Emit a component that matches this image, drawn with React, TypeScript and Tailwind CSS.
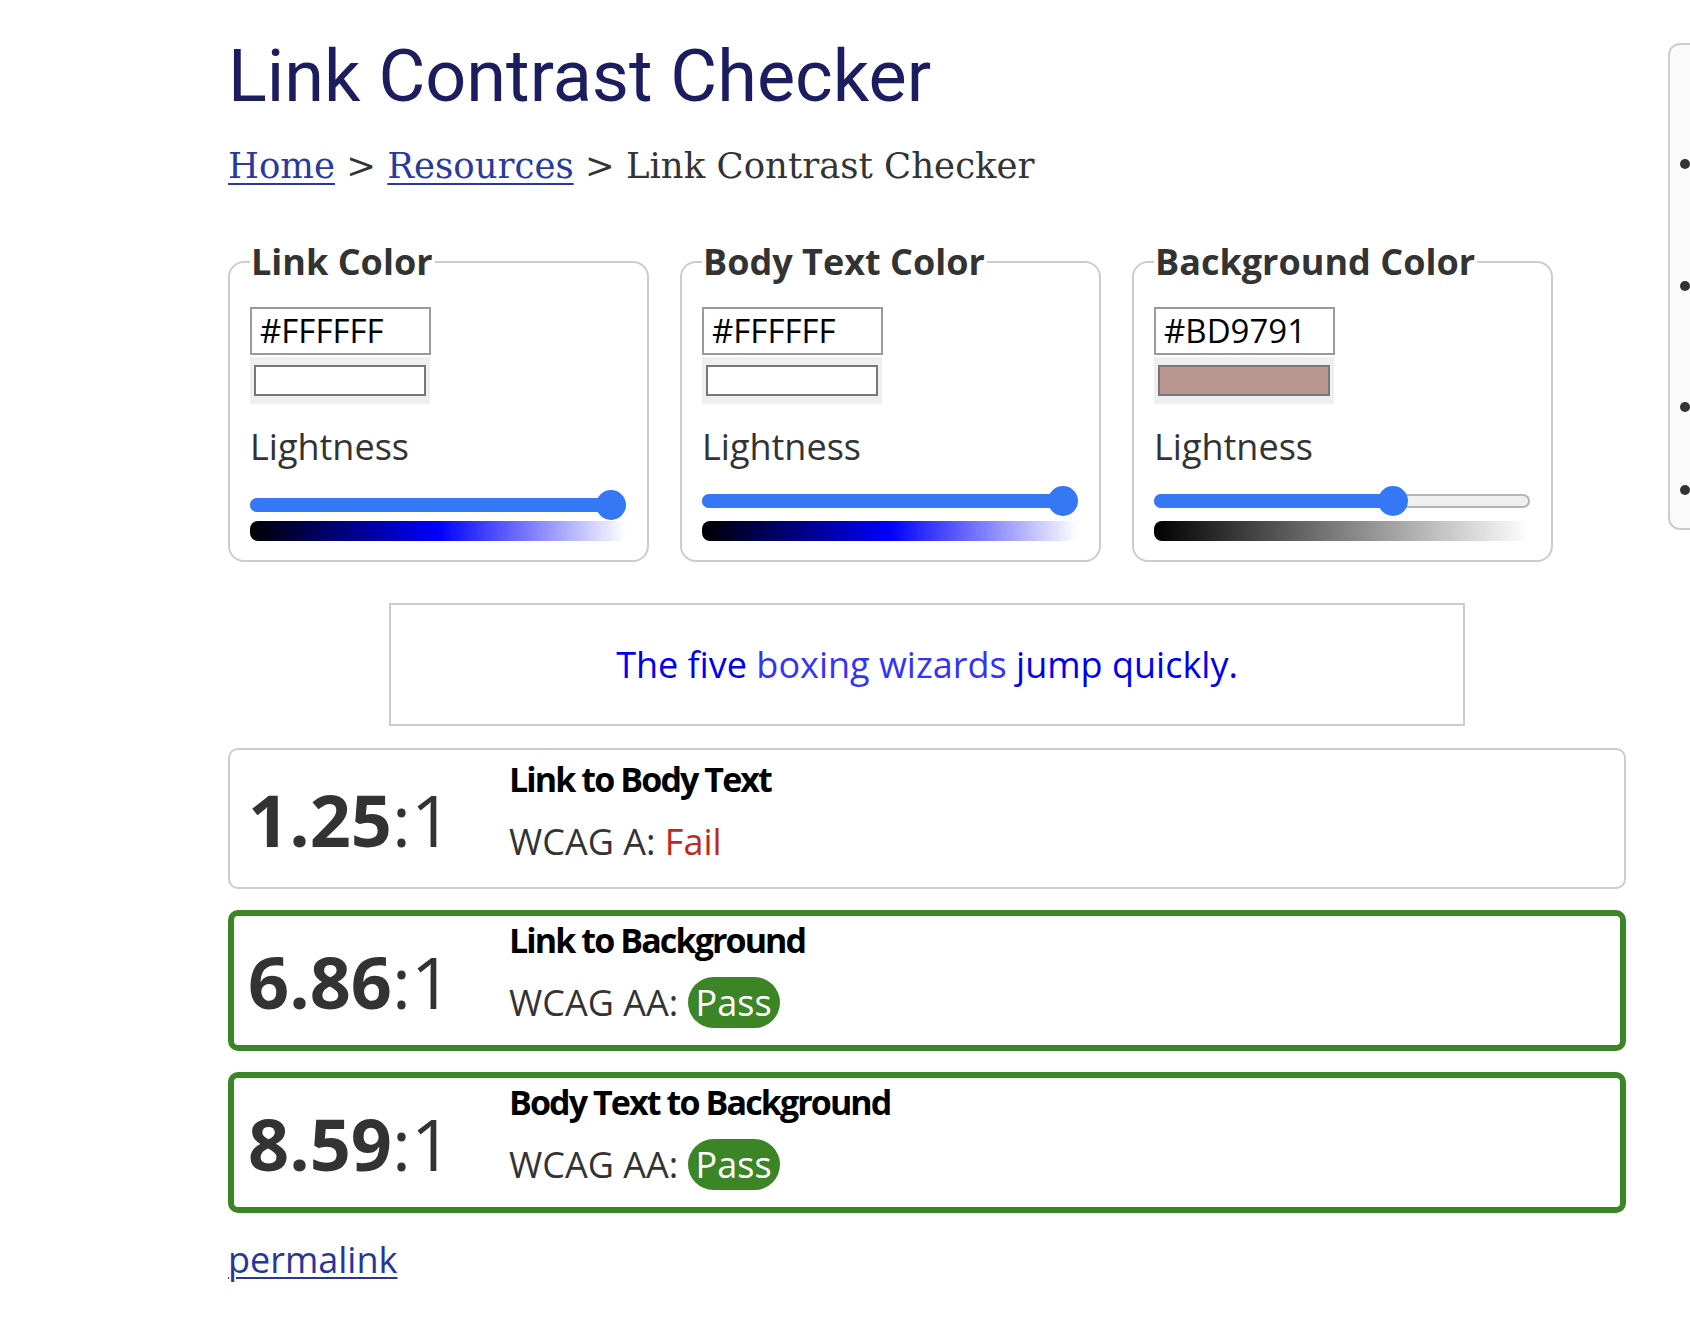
import React from "react";

type Picker = {
  label: string;
  hex: string;
  swatch: string;
  pct: number;
  ramp: string;
  raised: boolean;
};

const pickers: Picker[] = [
  { label: "Link Color", hex: "#FFFFFF", swatch: "bg-white", pct: 100, ramp: "bg-[linear-gradient(to_right,#000,#0000ff_50%,#fff)]", raised: false },
  { label: "Body Text Color", hex: "#FFFFFF", swatch: "bg-white", pct: 100, ramp: "bg-[linear-gradient(to_right,#000,#0000ff_50%,#fff)]", raised: true },
  { label: "Background Color", hex: "#BD9791", swatch: "bg-[#b8968f]", pct: 64.7, ramp: "bg-[linear-gradient(to_right,#000,#808080_50%,#fff)]", raised: true },
];

type Result = {
  big: string;
  title: string;
  level: string;
  pass: boolean;
};

const results: Result[] = [
  { big: "1.25", title: "Link to Body Text", level: "WCAG A:", pass: false },
  { big: "6.86", title: "Link to Background", level: "WCAG AA:", pass: true },
  { big: "8.59", title: "Body Text to Background", level: "WCAG AA:", pass: true },
];

function Slider({ pct, raised }: { pct: number; raised: boolean }) {
  // thumb travels across (track width - thumb width)
  const thumbLeft = (pct / 100) * 346;
  return (
    <div className={`relative h-[30px] w-[376px] ${raised ? "mt-[15px]" : "mt-[19px]"}`}>
      <div className="absolute left-0 right-0 top-[8px] h-[14px] rounded-full border-2 border-[#b4b4b4] bg-[#efefef]" />
      <div
        className="absolute left-0 top-[8px] h-[14px] rounded-l-full bg-[#3478f6]"
        style={{ width: thumbLeft + 15 }}
      />
      <div
        className="absolute top-0 h-[30px] w-[30px] rounded-full bg-[#3478f6]"
        style={{ left: thumbLeft }}
      />
    </div>
  );
}

function ColorBox({ p }: { p: Picker }) {
  return (
    <fieldset className="w-[420px] shrink-0 rounded-[16px] border-2 border-[#cccccc] pb-[19px] pl-[20px] pr-[21px] pt-[21px]">
      <legend className="pl-[1px] pr-[2px] text-[36px] font-bold leading-[49px] text-[#333]">{p.label}</legend>
      <input
        readOnly
        value={p.hex}
        className="block h-[48px] w-[181px] border-2 border-[#9a9a9a] bg-white px-[8px] text-[33px] text-black outline-none"
      />
      <div className="mt-[2px] w-[180px] bg-[#efefef] px-[4px] py-[8px]">
        <div className={`h-[31px] border-2 border-[#777] ${p.swatch}`} />
      </div>
      <div className="mt-[18px] text-[36px] leading-[49px] text-[#333]">Lightness</div>
      <Slider pct={p.pct} raised={p.raised} />
      <div className={`${p.raised ? "mt-[5px]" : "mt-[1px]"} h-[20px] w-[376px] rounded-l-[8px] ${p.ramp}`} />
    </fieldset>
  );
}

function ResultCard({ r }: { r: Result }) {
  return (
    <div
      className={`flex h-[141px] items-center rounded-[10px] bg-white ${
        r.pass ? "border-[6px] border-[#3b8526] pl-[14px]" : "border-2 border-[#cccccc] pl-[18px]"
      }`}
    >
      <div className="w-[261px] shrink-0 text-[72px] leading-[72px] text-[#333]">
        <span className="font-bold">{r.big}</span>:1
      </div>
      <div className={`self-start ${r.pass ? "pt-[4px]" : "pt-[9px]"}`}>
        <div className="text-[34px] font-bold leading-[40px] tracking-[-1.9px] text-black">{r.title}</div>
        <div className="mt-[17px] text-[36px] leading-[51px] text-[#333]">
          {r.level}{" "}
          {r.pass ? (
            <span className="inline-block rounded-full bg-[#3b8526] px-[8px] leading-[51px] text-white">Pass</span>
          ) : (
            <span className="text-[#c0281f]">Fail</span>
          )}
        </div>
      </div>
    </div>
  );
}

export default function App() {
  return (
    <div className="flex h-[1332px] w-full overflow-hidden bg-white pl-[228px] font-['Open_Sans',sans-serif]">
      <main className="w-[1398px] shrink-0 pt-[35px]">
        <h1 className="font-['Roboto',sans-serif] text-[72px] font-normal leading-[84px] text-[#1c1d5e]">
          Link Contrast Checker
        </h1>
        <nav className="mt-[27px] font-['DejaVu_Serif',serif] text-[35.5px] leading-[40px] text-[#333]">
          <a href="#" className="text-[#2a3a9a] underline decoration-2 underline-offset-[5px]">Home</a>
          {" > "}
          <a href="#" className="text-[#2a3a9a] underline decoration-2 underline-offset-[5px]">Resources</a>
          {" > Link Contrast Checker"}
        </nav>

        <div className="mt-[51px] flex gap-[31px]">
          {pickers.map((p) => (
            <ColorBox key={p.label} p={p} />
          ))}
        </div>

        <div className="mx-auto mt-[41px] flex h-[123px] w-[1076px] items-center justify-center border-2 border-[#cccccc] text-[36px] leading-[49px] text-[#0000ee]">
          <p>
            The five <span className="text-[#3434f4]">boxing wizards</span> jump quickly.
          </p>
        </div>

        <div className="mt-[22px] flex flex-col gap-[21px]">
          {results.map((r) => (
            <ResultCard key={r.title} r={r} />
          ))}
        </div>

        <a href="#" className="mt-[22px] block w-fit text-[36px] leading-[49px] text-[#26379a] underline decoration-2 underline-offset-[4px]">
          permalink
        </a>
      </main>

      <aside className="ml-[42px] mt-[43px] h-[487px] w-[300px] shrink-0 rounded-l-[12px] border-2 border-[#cccccc] bg-[#fafafa] pl-[10px] pt-[114px]">
        <div className="h-[10px] w-[10px] rounded-full bg-[#333]" />
        <div className="mt-[112px] h-[10px] w-[10px] rounded-full bg-[#333]" />
        <div className="mt-[111px] h-[10px] w-[10px] rounded-full bg-[#333]" />
        <div className="mt-[73px] h-[10px] w-[10px] rounded-full bg-[#333]" />
      </aside>
    </div>
  );
}
